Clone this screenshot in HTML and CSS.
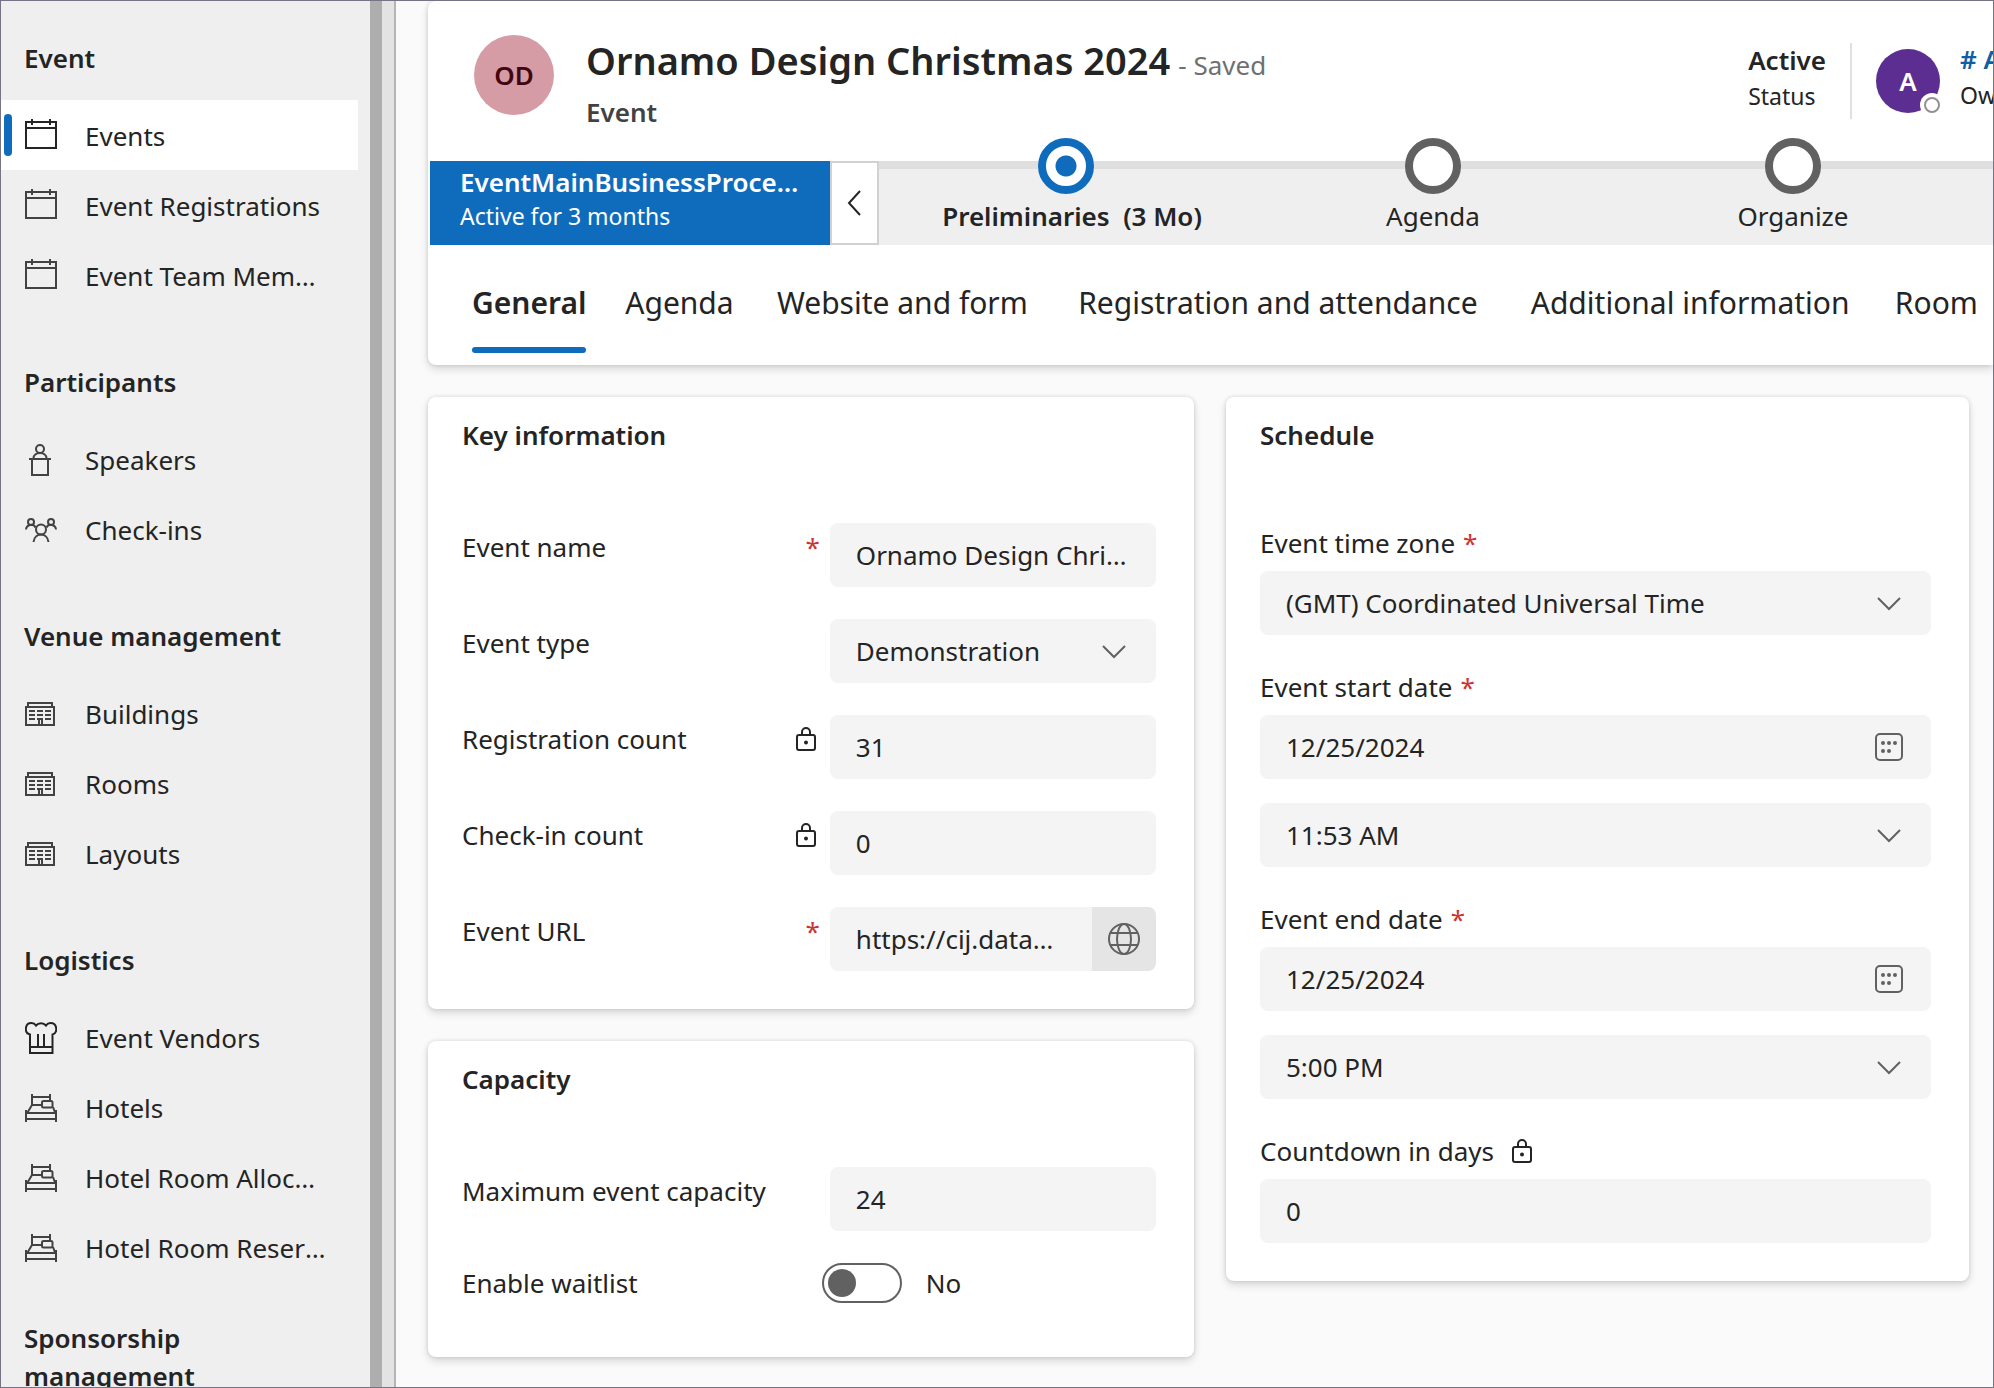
FILE: index.html
```html
<!DOCTYPE html>
<html lang="en">
<head>
<meta charset="utf-8">
<meta name="viewport" content="width=device-width, initial-scale=1">
<title>Ornamo Design Christmas 2024 - Event</title>
<link rel="stylesheet" href="styles.css">
</head>
<body>
<svg class="sprite" aria-hidden="true">
  <symbol id="i-calendar" viewBox="0 0 32 30"><path d="M1 3h30v26H1zM1 9h30M7 0v6M25 0v6"/></symbol>
  <symbol id="i-speaker" viewBox="0 0 32 32"><circle cx="15" cy="5" r="4"/><path d="M8.500 14.500c0-7.500 13-7.500 13 0M4 15h22M7 15v16h16V15"/></symbol>
  <symbol id="i-people" viewBox="0 0 32 24"><circle cx="6" cy="4" r="3"/><circle cx="26" cy="4" r="3"/><circle cx="16" cy="11.500" r="5"/><path d="M1 11.500C1.500 6 8.500 5.500 10.500 9.500M31 11.500C30.500 6 23.500 5.500 21.500 9.500M8.500 24c1-10 14-10 15 0"/></symbol>
  <symbol id="i-building" viewBox="0 0 32 24"><path d="M1 5h28v18H1zM3 5V1h24v4M4 9h6M12 9h6M20 9h6M4 13h6M12 13h6M20 13h6M4 17h6M20 17h6M12 17h6M14 23v-6M17 23v-6"/></symbol>
  <symbol id="i-chef" viewBox="0 0 32 32"><path d="M5 31V12.500C-1 11-.500 1 6.500 1c2 0 3.500 1 4.500 2.500C13.500.500 18.500.500 21 3.500 22 2 23.500 1 25.500 1c7 0 7.500 10 2 11.500V31zM5 25h22.500M13 12v13M19 12v13"/></symbol>
  <symbol id="i-bed" viewBox="0 0 32 28"><path d="M7 0v11h10M25 0v6M7 3h18M7 11 2.500 18.500M28 13l2 5.500M1 16v12M31 16v12M1 19h30M1 25h30"/><rect x="17" y="7" width="10.500" height="6.500" rx="1.500"/></symbol>
  <symbol id="i-lock" viewBox="0 0 20 24"><rect x="1" y="8" width="18" height="15" rx="2"/><path d="M6 8V5a4 4 0 0 1 8 0v3"/><circle class="dot" cx="10" cy="15.500" r="2"/></symbol>
  <symbol id="i-down" viewBox="0 0 24 14"><path d="m1 1 11 11L23 1"/></symbol>
  <symbol id="i-date" viewBox="0 0 28 28"><rect x="1" y="1" width="26" height="26" rx="4"/><g class="dot"><circle cx="8" cy="10" r="2"/><circle cx="14" cy="10" r="2"/><circle cx="20" cy="10" r="2"/><circle cx="8" cy="18" r="2"/><circle cx="14" cy="18" r="2"/></g></symbol>
  <symbol id="i-globe" viewBox="0 0 32 32"><circle cx="16" cy="16" r="15"/><ellipse cx="16" cy="16" rx="7" ry="15"/><path d="M2 10h28M2 22h28"/></symbol>
</svg>
<div class="app">
  <nav class="sidebar" aria-label="Site map">
    <h2 class="nav-heading nav-heading-first">Event</h2>
    <ul class="nav-list">
      <li><a class="nav-link is-current" href="#events" aria-current="page"><svg class="icon cal"><use href="#i-calendar"/></svg><span>Events</span></a></li>
      <li><a class="nav-link" href="#registrations"><svg class="icon cal"><use href="#i-calendar"/></svg><span>Event Registrations</span></a></li>
      <li><a class="nav-link" href="#team"><svg class="icon cal"><use href="#i-calendar"/></svg><span>Event Team Members</span></a></li>
    </ul>
    <h2 class="nav-heading">Participants</h2>
    <ul class="nav-list">
      <li><a class="nav-link" href="#speakers"><svg class="icon"><use href="#i-speaker"/></svg><span>Speakers</span></a></li>
      <li><a class="nav-link" href="#checkins"><svg class="icon short"><use href="#i-people"/></svg><span>Check-ins</span></a></li>
    </ul>
    <h2 class="nav-heading">Venue management</h2>
    <ul class="nav-list">
      <li><a class="nav-link" href="#buildings"><svg class="icon short"><use href="#i-building"/></svg><span>Buildings</span></a></li>
      <li><a class="nav-link" href="#rooms"><svg class="icon short"><use href="#i-building"/></svg><span>Rooms</span></a></li>
      <li><a class="nav-link" href="#layouts"><svg class="icon short"><use href="#i-building"/></svg><span>Layouts</span></a></li>
    </ul>
    <h2 class="nav-heading">Logistics</h2>
    <ul class="nav-list">
      <li><a class="nav-link" href="#vendors"><svg class="icon dark"><use href="#i-chef"/></svg><span>Event Vendors</span></a></li>
      <li><a class="nav-link" href="#hotels"><svg class="icon bed"><use href="#i-bed"/></svg><span>Hotels</span></a></li>
      <li><a class="nav-link" href="#allocations"><svg class="icon bed"><use href="#i-bed"/></svg><span>Hotel Room Allocations</span></a></li>
      <li><a class="nav-link" href="#reservations"><svg class="icon bed"><use href="#i-bed"/></svg><span>Hotel Room Reservations</span></a></li>
    </ul>
    <h2 class="nav-heading nav-heading-wrapped">Sponsorship management</h2>
  </nav>
  <div class="scrollbar"></div>

  <main class="main">
    <header class="record">
      <div class="record-top">
        <div class="avatar">OD</div>
        <div class="record-title">
          <div class="title-line"><h1>Ornamo Design Christmas 2024</h1><span class="saved">- Saved</span></div>
          <div class="entity">Event</div>
        </div>
        <div class="fact status"><strong>Active</strong><small>Status</small></div>
        <div class="owner-avatar">A<svg class="presence" viewBox="0 0 24 24"><circle class="halo" cx="12" cy="12" r="12"/><circle class="ring" cx="12" cy="12" r="7"/></svg></div>
        <div class="fact owner"><a href="#owner"># Admin</a><small>Owner</small></div>
      </div>

      <div class="process">
        <button class="process-name" type="button"><strong>EventMainBusinessProcessFlow</strong><span>Active for 3 months</span></button>
        <button class="process-back" type="button" aria-label="Previous stage"><svg viewBox="0 0 14 26"><path d="M13 1 2 13l11 12"/></svg></button>
        <ol class="stages">
          <li class="stage is-active"><button type="button" aria-label="Preliminaries stage"></button><span>Preliminaries&nbsp; (3 Mo)</span></li>
          <li class="stage"><button type="button" aria-label="Agenda stage"></button><span>Agenda</span></li>
          <li class="stage"><button type="button" aria-label="Organize stage"></button><span>Organize</span></li>
        </ol>
      </div>

      <div class="tabs" role="tablist">
        <button class="tab" role="tab" type="button" aria-selected="true" data-label="General">General</button>
        <button class="tab" role="tab" type="button" aria-selected="false" data-label="Agenda">Agenda</button>
        <button class="tab" role="tab" type="button" aria-selected="false" data-label="Website and form">Website and form</button>
        <button class="tab" role="tab" type="button" aria-selected="false" data-label="Registration and attendance">Registration and attendance</button>
        <button class="tab" role="tab" type="button" aria-selected="false" data-label="Additional information">Additional information</button>
        <button class="tab" role="tab" type="button" aria-selected="false" data-label="Room">Room</button>
      </div>
    </header>

    <form class="form">
      <div class="column">
        <section class="card">
          <h2>Key information</h2>
          <div class="rows">
            <div class="row"><label for="name">Event name</label><span class="required">*</span><input class="control" id="name" type="text" value="Ornamo Design Christmas 2024" required></div>
            <div class="row"><label for="type">Event type</label><span></span><div class="holder"><select class="control" id="type"><option>Demonstration</option></select><svg class="down"><use href="#i-down"/></svg></div></div>
            <div class="row"><label for="regs">Registration count</label><svg class="lock"><use href="#i-lock"/></svg><input class="control" id="regs" type="text" value="31" readonly></div>
            <div class="row"><label for="checks">Check-in count</label><svg class="lock"><use href="#i-lock"/></svg><input class="control" id="checks" type="text" value="0" readonly></div>
            <div class="row"><label for="url">Event URL</label><span class="required">*</span><div class="url"><input class="control" id="url" type="text" value="https://cij.dataverse.example.com" required><button type="button" aria-label="Open link"><svg><use href="#i-globe"/></svg></button></div></div>
          </div>
        </section>
        <section class="card">
          <h2>Capacity</h2>
          <div class="rows">
            <div class="row"><label for="max">Maximum event capacity</label><span></span><input class="control" id="max" type="text" value="24"></div>
            <div class="row row-toggle"><label for="wait">Enable waitlist</label><span></span><div class="toggle"><input id="wait" type="checkbox" role="switch"><span>No</span></div></div>
          </div>
        </section>
      </div>
      <section class="card">
        <h2>Schedule</h2>
        <div class="stack">
          <div class="field"><div class="caption"><label for="tz">Event time zone</label><span class="required">*</span></div>
            <div class="holder"><select class="control" id="tz"><option>(GMT) Coordinated Universal Time</option></select><svg class="down"><use href="#i-down"/></svg></div></div>
          <div class="field"><div class="caption"><label for="start">Event start date</label><span class="required">*</span></div>
            <div class="holder"><input class="control" id="start" type="text" value="12/25/2024"><svg class="date"><use href="#i-date"/></svg></div></div>
          <div class="holder"><select class="control" aria-label="Event start time"><option>11:53 AM</option></select><svg class="down"><use href="#i-down"/></svg></div>
          <div class="field"><div class="caption"><label for="end">Event end date</label><span class="required">*</span></div>
            <div class="holder"><input class="control" id="end" type="text" value="12/25/2024"><svg class="date"><use href="#i-date"/></svg></div></div>
          <div class="holder"><select class="control" aria-label="Event end time"><option>5:00 PM</option></select><svg class="down"><use href="#i-down"/></svg></div>
          <div class="field"><div class="caption"><label for="days">Countdown in days</label><svg class="lock"><use href="#i-lock"/></svg></div>
            <input class="control" id="days" type="text" value="0" readonly></div>
        </div>
      </section>
    </form>
  </main>
</div>
</body>
</html>
```
FILE: styles.css
```css
* { box-sizing: border-box; }

body {
  margin: 0;
  color: #242424;
  font: 26px/38px "Noto Sans", "Open Sans", sans-serif;
}

h1, h2, ul, ol { margin: 0; padding: 0; }
ul, ol { list-style: none; }
h2, strong { font-size: 26px; font-weight: 600; }
button, input, select { font: inherit; color: inherit; border: 0; margin: 0; }
button { padding: 0; background: none; cursor: pointer; }
svg { fill: none; stroke: currentColor; stroke-width: 2; flex: none; }
.dot { fill: currentColor; stroke: none; }
.sprite { display: none; }

.app {
  display: flex;
  height: 100vh;
  overflow: hidden;
  border: 1px solid #757384;
  background: #fafafa;
}

/* Site map */
.sidebar {
  flex: 0 0 369px;
  overflow: hidden;
  padding-right: 12px;
  background: #efefef;
}
.nav-heading { padding: 53px 100px 23px 23px; white-space: nowrap; }
.nav-heading-first { padding-top: 38px; }
.nav-heading-wrapped { padding-top: 37px; white-space: normal; }
.nav-link {
  position: relative;
  display: flex;
  align-items: center;
  gap: 28px;
  height: 70px;
  padding: 2px 30px 0 24px;
  color: inherit;
  text-decoration: none;
}
.nav-link span { overflow: hidden; text-overflow: ellipsis; white-space: nowrap; }
.nav-link.is-current { background: #fff; }
.nav-link.is-current::before {
  content: "";
  position: absolute;
  left: 3px;
  top: 14px;
  width: 8px;
  height: 42px;
  border-radius: 4px;
  background: #0f6cbd;
}
.icon { width: 32px; height: 32px; color: #424242; }
.icon.cal { height: 30px; margin-bottom: 4px; }
.icon.short { height: 24px; }
.icon.bed { height: 28px; }
.is-current .icon, .icon.dark { color: #242424; }
.scrollbar {
  flex: 0 0 26px;
  border-left: 12px solid #aeaeae;
  border-right: 2px solid #b5b5b5;
  background: #e3e3e3;
}

/* Record header */
.main { flex: 1; min-width: 0; padding-left: 32px; }
.record, .card {
  background: #fff;
  box-shadow: 0 4px 8px rgba(0, 0, 0, .14), 0 0 4px rgba(0, 0, 0, .12);
}
.record { border-radius: 8px 0 0 8px; }
.record-top {
  display: flex;
  align-items: flex-start;
  height: 160px;
  padding: 34px 0 0 46px;
  white-space: nowrap;
}
.avatar {
  flex: none;
  width: 80px;
  border-radius: 50%;
  background: #d69ca5;
  color: #420610;
  font-weight: 600;
  line-height: 80px;
  text-align: center;
}
.record-title { flex: 1; margin-left: 32px; }
.title-line { display: flex; align-items: baseline; gap: 8px; }
h1 { font-size: 38px; font-weight: 600; line-height: 50px; }
.saved { color: #707070; }
.entity { margin-top: 8px; color: #424242; font-weight: 600; }
.fact { display: flex; flex-direction: column; line-height: 34px; }
.fact small { font-size: 23px; line-height: 38px; }
.fact a { color: #115ea3; font-weight: 600; text-decoration: none; }
.status {
  height: 76px;
  margin: 8px 24px 0 0;
  padding-right: 24px;
  border-right: 2px solid #e0e0e0;
}
.owner-avatar {
  position: relative;
  flex: none;
  width: 64px;
  margin: 14px 20px 0 0;
  border-radius: 50%;
  background: #5c2e91;
  color: #fff;
  font-weight: 600;
  line-height: 64px;
  text-align: center;
}
.presence { position: absolute; right: -4px; bottom: -4px; width: 24px; height: 24px; }
.halo { fill: #fff; stroke: none; }
.ring { stroke: #919191; }
.owner { flex: 0 0 33px; overflow: hidden; padding-top: 7px; }

/* Business process bar */
.process { display: flex; height: 84px; padding-left: 2px; }
.process-name {
  flex: 0 0 400px;
  min-width: 0;
  display: flex;
  flex-direction: column;
  padding: 2px 30px 0;
  background: #0f6cbd;
  color: #fff;
  text-align: left;
}
.process-name strong { width: 100%; overflow: hidden; text-overflow: ellipsis; }
.process-name span { font-size: 23px; line-height: 30px; }
.process-back {
  display: flex;
  align-items: center;
  justify-content: center;
  flex: 0 0 49px;
  padding-right: 2px;
  border: 2px solid #d1d1d1;
  background: #fff;
}
.process-back svg { width: 14px; height: 26px; }
.stages {
  display: flex;
  flex: 1;
  min-width: 0;
  border-top: 8px solid #dfdfdf;
  background: #efefef;
}
.stage {
  display: flex;
  flex: 0 0 360px;
  flex-direction: column;
  align-items: center;
  margin-top: -31px;
}
.stage button {
  width: 56px;
  height: 56px;
  border: 8px solid #616161;
  border-radius: 50%;
  background: #fff;
}
.stage span { margin-top: 3px; }
.stage.is-active { flex-basis: 374px; font-weight: 600; }
.stage.is-active span { padding-left: 12px; }
.stage.is-active button {
  border-color: #0f6cbd;
  background: radial-gradient(circle, #0f6cbd 10px, #fff 11px);
}

/* Tabs */
.tabs { display: flex; gap: 37px; height: 120px; padding: 38px 0 12px 44px; overflow: hidden; }
.tab {
  display: flex;
  flex: none;
  flex-direction: column;
  height: 70px;
  border-bottom: 6px solid transparent;
  font-size: 30px;
  line-height: 40px;
  white-space: nowrap;
}
/* Reserves the selected-state width so labels don't shift */
.tab::after { content: attr(data-label); height: 0; overflow: hidden; font-weight: 600; }
.tab[aria-selected="true"] { font-weight: 600; position: relative; }
.tab[aria-selected="true"]::before {
  content: "";
  position: absolute;
  left: 0;
  right: 0;
  bottom: -6px;
  height: 6px;
  border-radius: 3px;
  background: #0f6cbd;
}

/* Form */
.form {
  display: grid;
  grid-template-columns: 766fr 743fr;
  gap: 32px;
  align-items: start;
  padding: 32px 24px 32px 0;
}
.column { display: grid; gap: 32px; }
.card { border-radius: 8px; padding: 19px 38px 38px 34px; }
.rows { display: grid; gap: 32px; padding-top: 69px; }
.row { display: grid; grid-template-columns: 1fr auto 47%; align-items: start; }
.row label { padding-top: 5px; }
.required { color: #c33; }
.row .required { padding: 5px 10px 0 0; }
.row .lock { margin: 12px 14px 0 0; }
.lock { width: 20px; height: 24px; }
.control {
  display: block;
  width: 100%;
  height: 64px;
  padding: 0 26px;
  border-radius: 8px;
  background: #f4f4f4;
  outline: 0;
  appearance: none;
  text-overflow: ellipsis;
}
.holder { position: relative; }
.down, .date { position: absolute; color: #616161; pointer-events: none; }
.down { right: 30px; top: 26px; width: 24px; height: 14px; }
.date { right: 28px; top: 18px; width: 28px; height: 28px; }
.url { display: flex; }
.url .control { flex: 1; min-width: 0; padding-right: 34px; border-radius: 8px 0 0 8px; }
.url button {
  display: flex;
  align-items: center;
  justify-content: center;
  flex: 0 0 64px;
  border-radius: 0 8px 8px 0;
  background: #e5e5e5;
  color: #616161;
}
.url svg { width: 32px; height: 32px; }
.row-toggle { height: 56px; }
.row-toggle label { padding-top: 1px; }
.toggle { display: flex; align-items: center; gap: 24px; margin-left: -8px; }
.toggle input {
  display: flex;
  align-items: center;
  width: 80px;
  height: 40px;
  padding-left: 4px;
  border: 2px solid #616161;
  border-radius: 20px;
  appearance: none;
}
.toggle input::before {
  content: "";
  width: 28px;
  height: 28px;
  border-radius: 50%;
  background: #616161;
}
.stack { display: grid; gap: 24px; padding-top: 61px; }
.caption { display: flex; align-items: center; gap: 8px; padding: 9px 0; }
.caption .lock { margin-left: 10px; }
```
